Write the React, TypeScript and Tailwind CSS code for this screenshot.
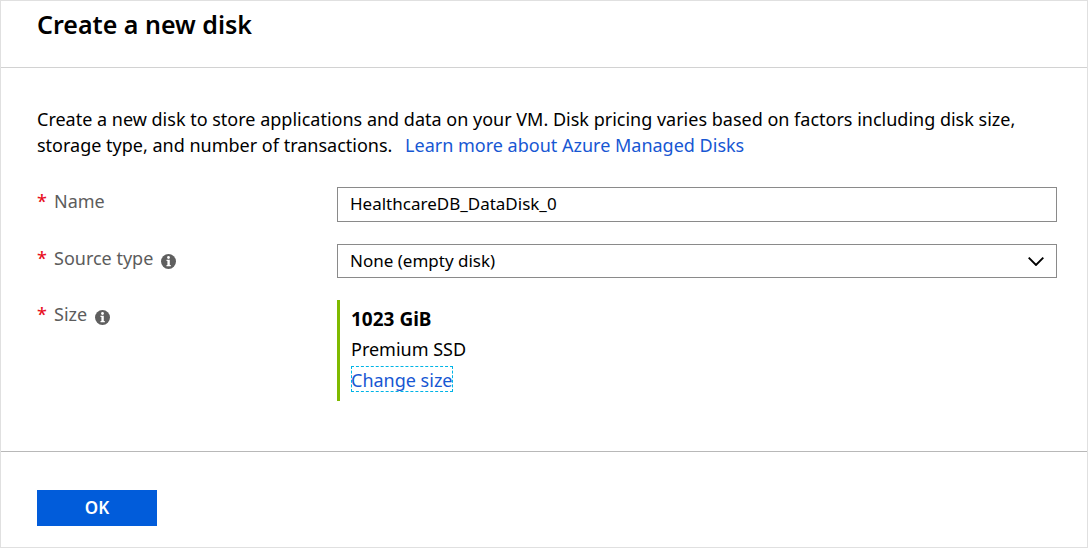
import { useState } from "react";
import type { ReactNode } from "react";

function InfoIcon() {
  return (
    <svg viewBox="0 0 15 15" className="mt-1.5 size-[15px] shrink-0" aria-hidden="true">
      <circle cx="7.5" cy="7.5" r="7.5" fill="#5f5f5f" />
      <circle cx="7.5" cy="3.5" r="1.4" fill="#fff" />
      <path d="M5.5 5.8h3.3v5.3h1v1.1H5.5v-1.1h.9V6.9h-.9z" fill="#fff" />
    </svg>
  );
}

function FieldLabel({ htmlFor, info, children }: { htmlFor?: string; info?: boolean; children: ReactNode }) {
  return (
    <label htmlFor={htmlFor} className="flex h-7 w-[300px] shrink-0 items-center text-[18px] leading-7 text-[#5c5c5c]">
      <span className="w-[17px] shrink-0 font-medium text-[#e81123]">*</span>
      <span className="mr-2">{children}</span>
      {info && <InfoIcon />}
    </label>
  );
}

export default function App() {
  const [name, setName] = useState("HealthcareDB_DataDisk_0");

  return (
    <main className="flex min-h-screen flex-col border border-[#e0e0e0] bg-white font-['Noto_Sans','Open_Sans',sans-serif] text-black">
      <header className="border-b border-[#d2d2d2] px-9 pt-[7px] pb-[27px]">
        <h1 className="text-[25px] leading-8 font-semibold">Create a new disk</h1>
      </header>

      <form className="flex grow flex-col" onSubmit={(e) => e.preventDefault()}>
        <div className="grow pt-[38px] pr-[30px] pb-12 pl-9">
          <p className="text-[18px] leading-[26px]">
            <span>
              Create a new disk to store applications and data on your VM. Disk pricing varies based on factors
              including disk size, storage type, and number of transactions.
            </span>{" "}
            <a href="#managed-disks" className="ml-2 text-[#1757d3]">
              Learn more about Azure Managed Disks
            </a>
          </p>

          <div className="mt-[29px] flex flex-col gap-[22px]">
            <div className="flex">
              <FieldLabel htmlFor="disk-name">Name</FieldLabel>
              <input
                id="disk-name"
                value={name}
                onChange={(e) => setName(e.target.value)}
                className="h-[35px] min-w-0 grow border border-[#8a8a8a] px-3 pb-0.5 text-[17px] outline-none"
              />
            </div>

            <div className="flex">
              <FieldLabel htmlFor="source-type" info>
                Source type
              </FieldLabel>
              <div className="relative grow">
                <select
                  id="source-type"
                  className="h-[34px] w-full appearance-none border border-[#8a8a8a] bg-white px-3 text-[17px] outline-none"
                >
                  <option>None (empty disk)</option>
                </select>
                <svg
                  viewBox="0 0 16 9"
                  className="pointer-events-none absolute top-[13px] right-[13px] h-[9px] w-4"
                  aria-hidden="true"
                >
                  <path d="M.7.7 8 8 15.3.7" fill="none" stroke="#000" strokeWidth="1.9" />
                </svg>
              </div>
            </div>

            <div className="flex">
              <FieldLabel info>Size</FieldLabel>
              <div className="flex flex-col items-start border-l-3 border-[#7fba00] pt-1 pb-[9px] pl-[11px] text-[18px]">
                <strong className="text-[19px] leading-[30px] font-bold">1023 GiB</strong>
                <span className="leading-[30px]">Premium SSD</span>
                <a
                  href="#change-size"
                  className="mt-[2px] h-[26px] leading-7 text-[#1757d3] outline-1 -outline-offset-1 outline-[#00b4e6] outline-dashed"
                >
                  Change size
                </a>
              </div>
            </div>
          </div>
        </div>

        <footer className="border-t border-[#b8b8b8] px-9 pt-[38px] pb-[21px]">
          <button type="submit" className="h-9 w-[120px] bg-[#015cda] text-[17px] font-semibold text-white">
            OK
          </button>
        </footer>
      </form>
    </main>
  );
}
